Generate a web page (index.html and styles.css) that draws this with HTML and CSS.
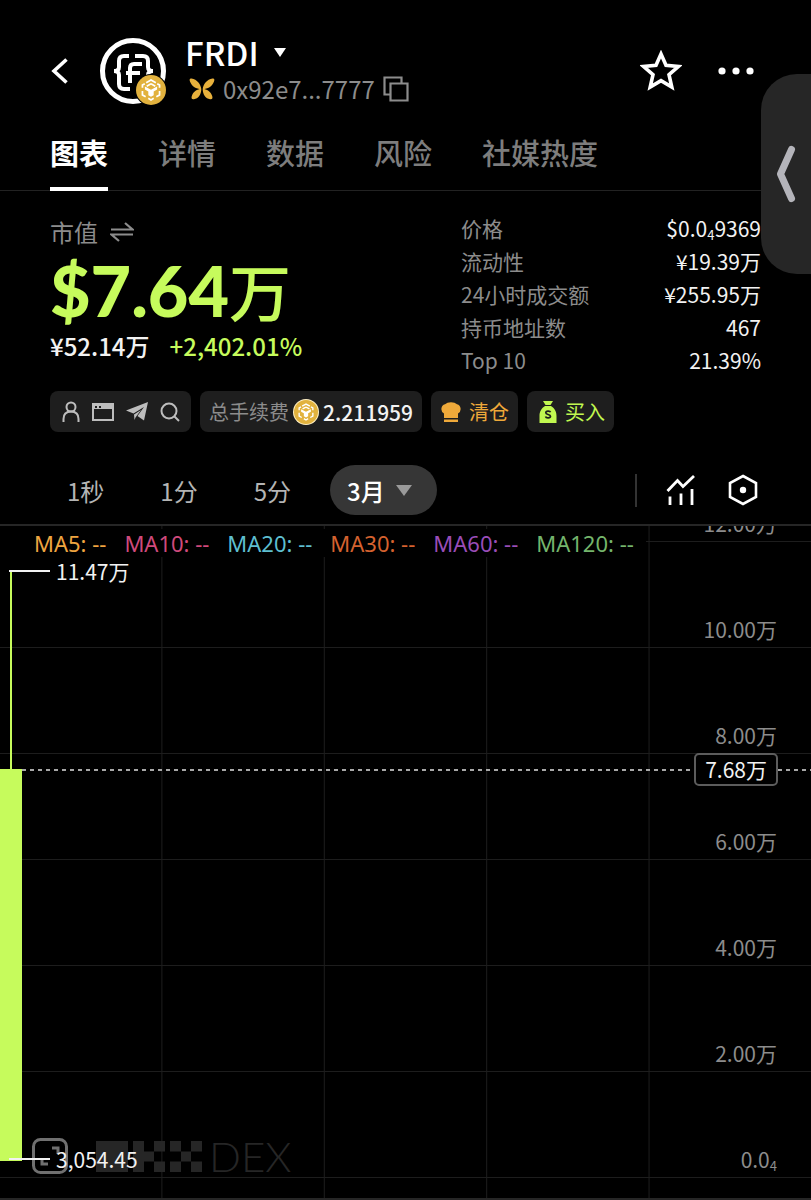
FILE: index.html
```
<!DOCTYPE html>
<html lang="zh-CN">
<head>
    <meta charset="UTF-8">
    <meta name="viewport" content="width=device-width, initial-scale=1.0">
    <title>FRDI</title>
    <link rel="stylesheet" href="styles.css">
</head>
<body>
    <!-- shared BNB coin symbol -->
    <svg class="defs" aria-hidden="true">
        <symbol id="coin" viewBox="0 0 28 28">
            <circle cx="14" cy="14" r="14" fill="#e2b23e"/>
            <g fill="none" stroke="#fff" stroke-width="1.6">
                <path d="M9.5 7.2 14 4.7l4.500 2.500M14 8.200l-4 2.200M14 8.200l4 2.200M6 12V9.300l2.200-1.200M22 12V9.300l-2.200-1.200M6 15v3.700l3 1.700M22 15v3.700l-3 1.700M11.500 21.800 14 23.300l2.500-1.500"/>
            </g>
            <path d="M8.300 10.800 14 13.800l5.700-3v2.800l-3.200 1.900v3.400L14 20.400l-2.500-1.500v-3.400l-3.200-1.900z" fill="#fff"/>
        </symbol>
    </svg>

    <header class="header">
        <button class="icon-btn back" aria-label="返回">
            <svg width="20" height="28" viewBox="0 0 20 28"><path d="M16.500 2.500 4 14l12.500 11.500" fill="none" stroke="#fff" stroke-width="3.600"/></svg>
        </button>
        <div class="avatar">
            <svg width="68" height="68" viewBox="0 0 68 68">
                <circle cx="34" cy="34" r="30.500" fill="#000" stroke="#fff" stroke-width="5"/>
                <g fill="none" stroke="#fff" stroke-width="4">
                    <path d="M30 19h-5q-5 0-5 5v6q0 4-5 4 5 0 5 4v9q0 5 5 5h6M36 19h8q5 0 5 5v6q0 4 5 4-5 0-5 4v6"/>
                    <path d="M31 46V31q0-4 4-4h8M27 36h14"/>
                </g>
            </svg>
            <svg class="avatar-badge" width="32" height="32" viewBox="0 0 32 32"><circle cx="16" cy="16" r="16"/><use href="#coin" x="1" y="1" width="30" height="30"/></svg>
        </div>
        <div class="token">
            <button class="token-name">FRDI
                <svg width="12" height="9" viewBox="0 0 12 9"><path d="M0 0h12L6 9z" fill="#fff"/></svg>
            </button>
            <div class="token-address">
                <svg width="26" height="22" viewBox="0 0 26 22" fill="#e8b13c">
                    <path d="M12.300 11C11.800 6 8 1.500 2.500.5.300.2.300 2 1.200 4 3 8.500 7 11 12.300 11zM13.700 11C14.200 6 18 1.500 23.500.5c2.200-.3 2.200 1.500 1.300 3.500C23 8.500 19 11 13.700 11zM12.300 11c0 5.500-3 9.500-7.300 10.300-2.500.4-3-1.300-2-3.800C4.500 13.500 8 11 12.300 11zM13.700 11c0 5.500 3 9.500 7.300 10.300 2.500.4 3-1.300 2-3.800C21.500 13.500 18 11 13.700 11z"/>
                </svg>
                <span>0x92e7...7777</span>
                <button class="icon-btn" aria-label="复制">
                    <svg width="26" height="26" viewBox="0 0 26 26" fill="none" stroke="#8c8c8c" stroke-width="2.200"><path d="M7 18.500H1.500v-17h17V7"/><path d="M7.500 7.500h17v17h-17z"/></svg>
                </button>
            </div>
        </div>
        <div class="header-actions">
            <button class="icon-btn" aria-label="收藏">
                <svg width="42" height="42" viewBox="0 0 42 42"><path d="M21 4l5 11.300 12.300 1.200-9.300 8.200 2.800 12.300L21 30.600 10.200 37 13 24.700 3.700 16.500 16 15.300z" fill="none" stroke="#fff" stroke-width="3.600"/></svg>
            </button>
            <button class="icon-btn" aria-label="更多">
                <svg width="36" height="8" viewBox="0 0 36 8" fill="#fff"><circle cx="4" cy="4" r="3.600"/><circle cx="18" cy="4" r="3.600"/><circle cx="32" cy="4" r="3.600"/></svg>
            </button>
        </div>
    </header>

    <nav class="tabs">
        <a class="tab active" href="#">图表</a>
        <a class="tab" href="#">详情</a>
        <a class="tab" href="#">数据</a>
        <a class="tab" href="#">风险</a>
        <a class="tab" href="#">社媒热度</a>
    </nav>

    <button class="drawer" aria-label="展开侧栏">
        <svg width="20" height="58" viewBox="0 0 20 58"><path d="M15.500 4.500 4.500 29l11 24.500" fill="none" stroke="#b4b4ba" stroke-width="7" stroke-linecap="round" stroke-linejoin="round"/></svg>
    </button>

    <main>
        <section class="summary">
            <div class="market">
                <div class="market-label">市值
                    <svg width="24" height="20" viewBox="0 0 24 20" fill="none" stroke="#8c8c8c" stroke-width="2.200"><path d="M1 7.500h21.500L15 1M23 12.500H1.500L9 19"/></svg>
                </div>
                <div class="market-value">$7.64<span>万</span></div>
                <div class="market-sub"><span>¥52.14万</span><span class="up">+2,402.01%</span></div>
            </div>
            <dl class="stats">
                <div><dt>价格</dt><dd>$0.0<small>4</small>9369</dd></div>
                <div><dt>流动性</dt><dd>¥19.39万</dd></div>
                <div><dt>24小时成交额</dt><dd>¥255.95万</dd></div>
                <div><dt>持币地址数</dt><dd>467</dd></div>
                <div><dt>Top 10</dt><dd>21.39%</dd></div>
            </dl>
        </section>

        <section class="chips">
            <div class="chip links">
                <button class="icon-btn" aria-label="开发者">
                    <svg width="18" height="22" viewBox="0 0 18 22" fill="none" stroke="#bdbdbd" stroke-width="2"><circle cx="9" cy="6" r="4.500"/><path d="M1.500 21v-3q0-7.500 7.500-7.500t7.500 7.500v3"/></svg>
                </button>
                <button class="icon-btn" aria-label="网站">
                    <svg width="22" height="18" viewBox="0 0 22 18"><path d="M1 1h20v16H1z" fill="none" stroke="#bdbdbd" stroke-width="2"/><path d="M1 1h20v5H1z" fill="#bdbdbd"/><path d="M3 3h2v2H3zM7 3h2v2H7z" fill="#1e1e1e"/></svg>
                </button>
                <button class="icon-btn" aria-label="电报">
                    <svg width="22" height="19" viewBox="0 0 22 19" fill="#bdbdbd"><path d="M22 0 18 18.500 11.500 14 18 5 7.500 11.500 0 8.500z"/><path d="M8 12.500 15 8l-5.500 7.500L8.500 18z"/></svg>
                </button>
                <button class="icon-btn" aria-label="搜索">
                    <svg width="20" height="20" viewBox="0 0 20 20" fill="none" stroke="#bdbdbd" stroke-width="2"><circle cx="9" cy="9" r="7.500"/><path d="m14.500 14.500 4.500 4.500"/></svg>
                </button>
            </div>
            <div class="chip fee">
                <span>总手续费</span>
                <svg width="26" height="26" viewBox="0 0 26 26"><circle cx="13" cy="13" r="13" fill="#fff0c4"/><use href="#coin" x="1" y="1" width="24" height="24"/></svg>
                <strong>2.211959</strong>
            </div>
            <button class="chip sell">
                <svg width="22" height="20" viewBox="0 0 22 20" fill="#efa93a"><path d="M4 16v-4.500A5 5 0 0 1 5 2.300 7 4 0 0 1 17 2.300a5 5 0 0 1 1 9.200V16zM4 17.500h14V20H4z"/></svg>
                清仓
            </button>
            <button class="chip buy">
                <svg width="18" height="22" viewBox="0 0 18 22"><path d="M4 0h10l-2.500 4h-5zM6 5h6c4 2.500 5.500 6 5.500 10v7H.500v-7C.500 11 2 7.500 6 5z" fill="#c1f850"/><path d="M11.500 11.300C11 9.700 6.800 9.800 6.800 11.800c0 2.200 4.700 1.200 4.700 3.500 0 2-4.500 2.100-5 .3" fill="none" stroke="#1e1e1e" stroke-width="1.700"/></svg>
                买入
            </button>
        </section>

        <section class="periods">
            <button class="period">1秒</button>
            <button class="period">1分</button>
            <button class="period">5分</button>
            <button class="period selected">3月
                <svg width="16" height="11" viewBox="0 0 16 11"><path d="M0 0h16L8 11z" fill="#9a9a9a"/></svg>
            </button>
            <div class="chart-tools">
                <button class="icon-btn" aria-label="指标">
                    <svg width="30" height="32" viewBox="0 0 30 32" fill="none" stroke="#fff" stroke-width="2.800"><path d="m1.500 17 10-10.500 5.500 6L28 2M4 22.500V31M15 19.500V31M26 15v16"/></svg>
                </button>
                <button class="icon-btn" aria-label="设置">
                    <svg width="30" height="32" viewBox="0 0 30 32"><path d="M15 2l13 7v14l-13 7-13-7V9z" fill="none" stroke="#fff" stroke-width="2.600"/><circle cx="15" cy="16" r="3.200" fill="#fff"/></svg>
                </button>
            </div>
        </section>

        <section class="chart">
            <div class="grid">
                <div class="grid-row top"><span>12.00万</span></div>
                <div class="grid-row"><span>10.00万</span></div>
                <div class="grid-row"><span>8.00万</span></div>
                <div class="grid-row"><span>6.00万</span></div>
                <div class="grid-row"><span>4.00万</span></div>
                <div class="grid-row"><span>2.00万</span></div>
                <div class="grid-row"><span>0.0<small>4</small></span></div>
                <div class="grid-row last"></div>
            </div>

            <div class="watermark">
                <svg width="106" height="31" viewBox="0 0 106 31" fill="#262626"><path d="M0 0h32v31H0zM37 0h11v10.500h10v10H48V31H37zM58 0h11v10.500H58zM58 20.500h11V31H58zM74 0h11v10.500H74zM95 0h11v10.500H95zM85 10.500h10v10H85zM74 20.500h11V31H74zM95 20.500h11V31H95z"/></svg>
                <span>DEX</span>
            </div>
            <button class="icon-btn expand" aria-label="全屏">
                <svg width="36" height="36" viewBox="0 0 36 36" fill="none" stroke="#707070" stroke-width="3"><rect x="1.500" y="1.500" width="33" height="33" rx="7"/><path d="M20 10h6v6M16 26h-6v-6"/></svg>
            </button>

            <div class="candle-wick"></div>
            <div class="candle-body"></div>
            <div class="mark high">11.47万</div>
            <div class="mark low">3,054.45</div>
            <div class="price-line"><span>7.68万</span></div>

            <div class="legend">
                <span class="ma5">MA5: --</span>
                <span class="ma10">MA10: --</span>
                <span class="ma20">MA20: --</span>
                <span class="ma30">MA30: --</span>
                <span class="ma60">MA60: --</span>
                <span class="ma120">MA120: --</span>
            </div>
        </section>
    </main>
</body>
</html>
```
FILE: styles.css
```
* {
    box-sizing: border-box;
}
body {
    margin: 0;
    min-height: 100vh;
    position: relative;
    overflow-x: hidden;
    background-color: #000;
    color: #f2f2f2;
    font-family: "Noto Sans CJK SC", "Noto Sans", sans-serif;
    font-size: 21px;
}
button {
    font: inherit;
    color: inherit;
    background: none;
    border: none;
    padding: 0;
    cursor: pointer;
}
svg {
    display: block;
    flex: none;
}
.defs {
    position: absolute;
    width: 0;
    height: 0;
}
.icon-btn {
    display: flex;
    align-items: center;
    justify-content: center;
}

/* header */
.header {
    display: flex;
    align-items: center;
    padding: 34px 57px 0 50px;
}
.avatar {
    position: relative;
    margin: 0 18px 0 29px;
}
.avatar-badge {
    position: absolute;
    right: 0;
    bottom: -1px;
}
.token-name {
    display: flex;
    align-items: center;
    gap: 15px;
    font-size: 33px;
    font-weight: 500;
    line-height: 36px;
    color: #fff;
}
.token-address {
    display: flex;
    align-items: center;
    gap: 8px;
    padding-left: 4px;
    font-size: 24px;
    line-height: 38px;
    color: #8c8c8c;
}
.header-actions {
    display: flex;
    align-items: center;
    gap: 36px;
    margin-left: auto;
}

/* tabs */
.tabs {
    display: flex;
    gap: 50px;
    padding: 24px 50px 0;
    border-bottom: 1px solid #222;
}
.tab {
    padding-bottom: 15px;
    margin-bottom: -1px;
    border-bottom: 4px solid transparent;
    font-size: 29px;
    font-weight: 500;
    line-height: 40px;
    color: #7d7d7d;
    text-decoration: none;
}
.tab.active {
    font-weight: 700;
    color: #fff;
    border-bottom-color: #fff;
}

.drawer {
    position: absolute;
    top: 74px;
    right: 0;
    width: 50px;
    height: 200px;
    padding-left: 15px;
    background-color: #262626;
    border-radius: 36px 0 0 36px;
}

/* summary */
.summary {
    display: flex;
    justify-content: space-between;
    padding: 21px 50px 0;
}
.market-label {
    display: flex;
    align-items: center;
    gap: 12px;
    font-size: 24px;
    line-height: 40px;
    color: #8c8c8c;
}
.market-value {
    font-family: Lato, "Noto Sans CJK SC", sans-serif;
    font-size: 70px;
    font-weight: 900;
    line-height: 76px;
    color: #c6fb5c;
}
.market-value span {
    font-size: 62px;
    font-weight: 500;
}
.market-sub {
    display: flex;
    gap: 20px;
    font-size: 24px;
    font-weight: 500;
    line-height: 30px;
}
.up {
    color: #c6fb5c;
}
.stats {
    width: 300px;
    margin: 0;
    line-height: 33px;
}
.stats div {
    display: flex;
    justify-content: space-between;
}
.stats dt {
    color: #8c8c8c;
}
.stats dd {
    margin: 0;
}
small {
    font-size: 13px;
    line-height: 1;
    position: relative;
    top: 3px;
}

/* chips */
.chips {
    display: flex;
    gap: 9px;
    padding: 14px 50px 0;
    font-size: 20px;
}
.chip {
    display: flex;
    align-items: center;
    height: 41px;
    padding: 0 9px;
    gap: 7px;
    background-color: #1e1e1e;
    border-radius: 8px;
}
.chip.links {
    gap: 12px;
    padding: 0 11px 0 12px;
}
.chip.fee {
    gap: 4px;
    color: #8c8c8c;
}
.chip.fee strong {
    font-size: 21px;
    font-weight: 500;
    color: #f2f2f2;
}
.chip.sell {
    color: #efa93a;
}
.chip.buy {
    padding-left: 12px;
    gap: 8px;
    color: #c1f850;
}

/* period switch */
.periods {
    display: flex;
    align-items: center;
    gap: 56px;
    padding: 33px 53px 9px 67px;
    font-size: 24px;
    color: #b4b4b4;
}
.period.selected {
    display: flex;
    align-items: center;
    gap: 11px;
    height: 50px;
    margin-left: -17px;
    padding: 0 25px 0 17px;
    border-radius: 25px;
    background-color: #363636;
    color: #fff;
    font-weight: 500;
}
.chart-tools {
    display: flex;
    align-items: center;
    gap: 32px;
    height: 33px;
    margin-left: auto;
    padding-left: 29px;
    border-left: 2px solid #333;
}

/* chart */
.chart {
    position: relative;
    border-top: 2px solid #262626;
    border-bottom: 2px solid #262626;
}
.grid {
    margin-right: -1px;
    overflow: hidden;
    background-image: linear-gradient(to left, #1d1d1d 1px, transparent 1px);
    background-size: 20% 100%;
}
.grid-row {
    display: flex;
    justify-content: flex-end;
    align-items: flex-end;
    height: 106px;
    padding: 0 35px 3px 0;
    border-bottom: 1px solid #1d1d1d;
    line-height: 30px;
    color: #8c8c8c;
}
.grid-row.top {
    height: 16px;
}
.grid-row.last {
    height: 20px;
    border-bottom: none;
}
.legend {
    position: absolute;
    top: 3px;
    left: 0;
    display: flex;
    gap: 18px;
    padding: 0 12px 0 34px;
    background-color: #000;
    font-family: "Noto Sans", sans-serif;
    font-size: 22px;
    line-height: 28px;
    white-space: nowrap;
}
.ma5 { color: #efa541; }
.ma10 { color: #d04a7c; }
.ma20 { color: #5ebfd0; }
.ma30 { color: #d5622f; }
.ma60 { color: #9a4db8; }
.ma120 { color: #74b56c; }

.candle-wick {
    position: absolute;
    top: 45px;
    left: 10px;
    width: 2px;
    height: 200px;
    background-color: #c6fb5c;
}
.candle-body {
    position: absolute;
    top: 243px;
    left: 0;
    width: 22px;
    height: 392px;
    background-color: #c6fb5c;
}
.mark {
    position: absolute;
    left: 9px;
    display: flex;
    align-items: center;
    gap: 6px;
    line-height: 30px;
}
.mark::before {
    content: "";
    width: 41px;
    height: 2px;
    background-color: #f2f2f2;
}
.mark.high {
    top: 30px;
}
.mark.low {
    top: 618px;
}
.price-line {
    position: absolute;
    top: 227px;
    left: 22px;
    right: 0;
    display: flex;
    align-items: center;
}
.price-line::before,
.price-line::after {
    content: "";
    height: 2px;
    background: repeating-linear-gradient(to right, #a8a8a8 0 4px, transparent 4px 8px);
}
.price-line::before {
    flex: 1;
}
.price-line::after {
    width: 33px;
}
.price-line span {
    padding: 0 9px;
    border: 2px solid #5c5c5c;
    border-radius: 5px;
    background-color: #000;
    line-height: 29px;
}
.expand {
    position: absolute;
    left: 32px;
    top: 612px;
}
.watermark {
    position: absolute;
    left: 96px;
    top: 607px;
    display: flex;
    align-items: center;
    gap: 7px;
    font-family: Lato, sans-serif;
    font-size: 42px;
    font-weight: 300;
    line-height: 46px;
    color: #262626;
}
```
